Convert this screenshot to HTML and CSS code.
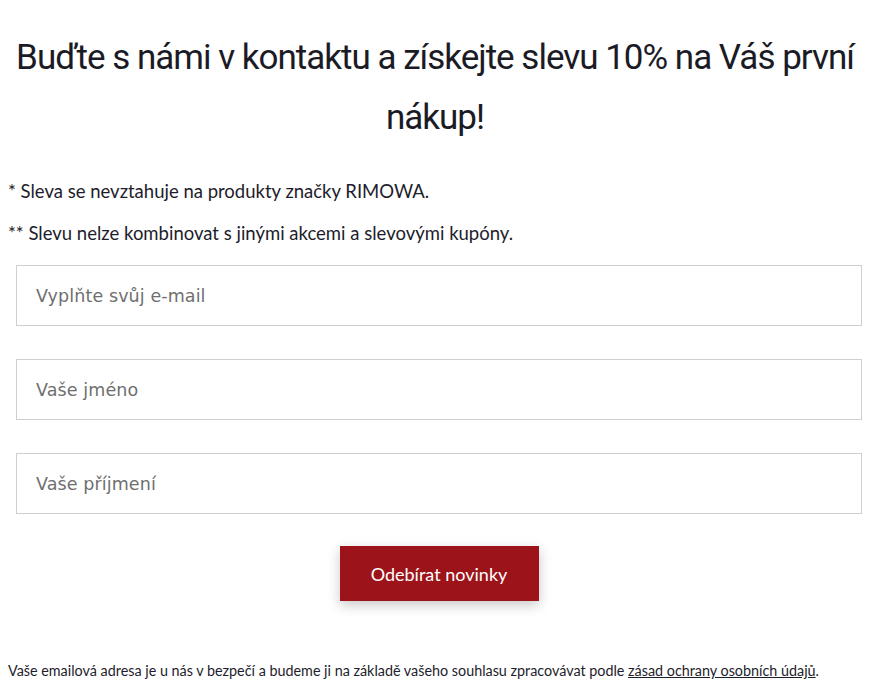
FILE: index.html
```html
<!DOCTYPE html>
<html lang="cs">
<head>
    <meta charset="UTF-8">
    <meta name="viewport" content="width=device-width, initial-scale=1.0">
    <title>Newsletter</title>
    <link rel="stylesheet" href="styles.css">
</head>
<body>
    <div class="newsletter">
        <h1>Buďte s námi v kontaktu a získejte slevu 10% na Váš první nákup!</h1>

        <p class="note">* Sleva se nevztahuje na produkty značky RIMOWA.</p>
        <p class="note">** Slevu nelze kombinovat s jinými akcemi a slevovými kupóny.</p>

        <form class="signup-form" onsubmit="return false;">
            <input type="email" placeholder="Vyplňte svůj e-mail">
            <input type="text" placeholder="Vaše jméno">
            <input type="text" placeholder="Vaše příjmení">
            <button type="submit">Odebírat novinky</button>
        </form>

        <p class="privacy">Vaše emailová adresa je u nás v bezpečí a budeme ji na základě vašeho souhlasu zpracovávat podle <a href="#">zásad ochrany osobních údajů</a>.</p>
    </div>
</body>
</html>
```

FILE: styles.css
```css
body {
    margin: 0;
    padding: 0 8px;
    font-family: "Lato", "Liberation Sans", sans-serif;
    color: #1d1d2b;
    background-color: #fff;
}
.newsletter {
    display: flex;
    flex-direction: column;
}
h1 {
    font-family: "Roboto", sans-serif;
    font-weight: 400;
    font-size: 35px;
    line-height: 60px;
    letter-spacing: -1px;
    text-align: center;
    margin: 28px 0 31px;
    color: #1b1b26;
}
.note {
    font-size: 18.5px;
    line-height: 24px;
    margin: 0 0 18px;
}
.signup-form {
    display: flex;
    flex-direction: column;
    gap: 33px;
    padding-left: 8px;
    margin-top: 2px;
}
.signup-form input {
    height: 61px;
    box-sizing: border-box;
    border: 1px solid #cfcfcf;
    padding: 0 19px;
    font-family: "DejaVu Sans", sans-serif;
    font-size: 17.5px;
    letter-spacing: 0.1px;
    color: #333;
    outline: none;
}
.signup-form input::placeholder {
    color: #6f6f6f;
}
.signup-form button {
    align-self: center;
    width: 199px;
    height: 55px;
    margin-top: -1px;
    border: none;
    background-color: #9c1419;
    color: #fff;
    font-family: "Lato", sans-serif;
    font-size: 18px;
    box-shadow: 0 4px 12px rgba(0, 0, 0, 0.22);
    cursor: pointer;
}
.privacy {
    font-size: 14.35px;
    margin: 61px 0 0;
}
.privacy a {
    color: inherit;
}
```
